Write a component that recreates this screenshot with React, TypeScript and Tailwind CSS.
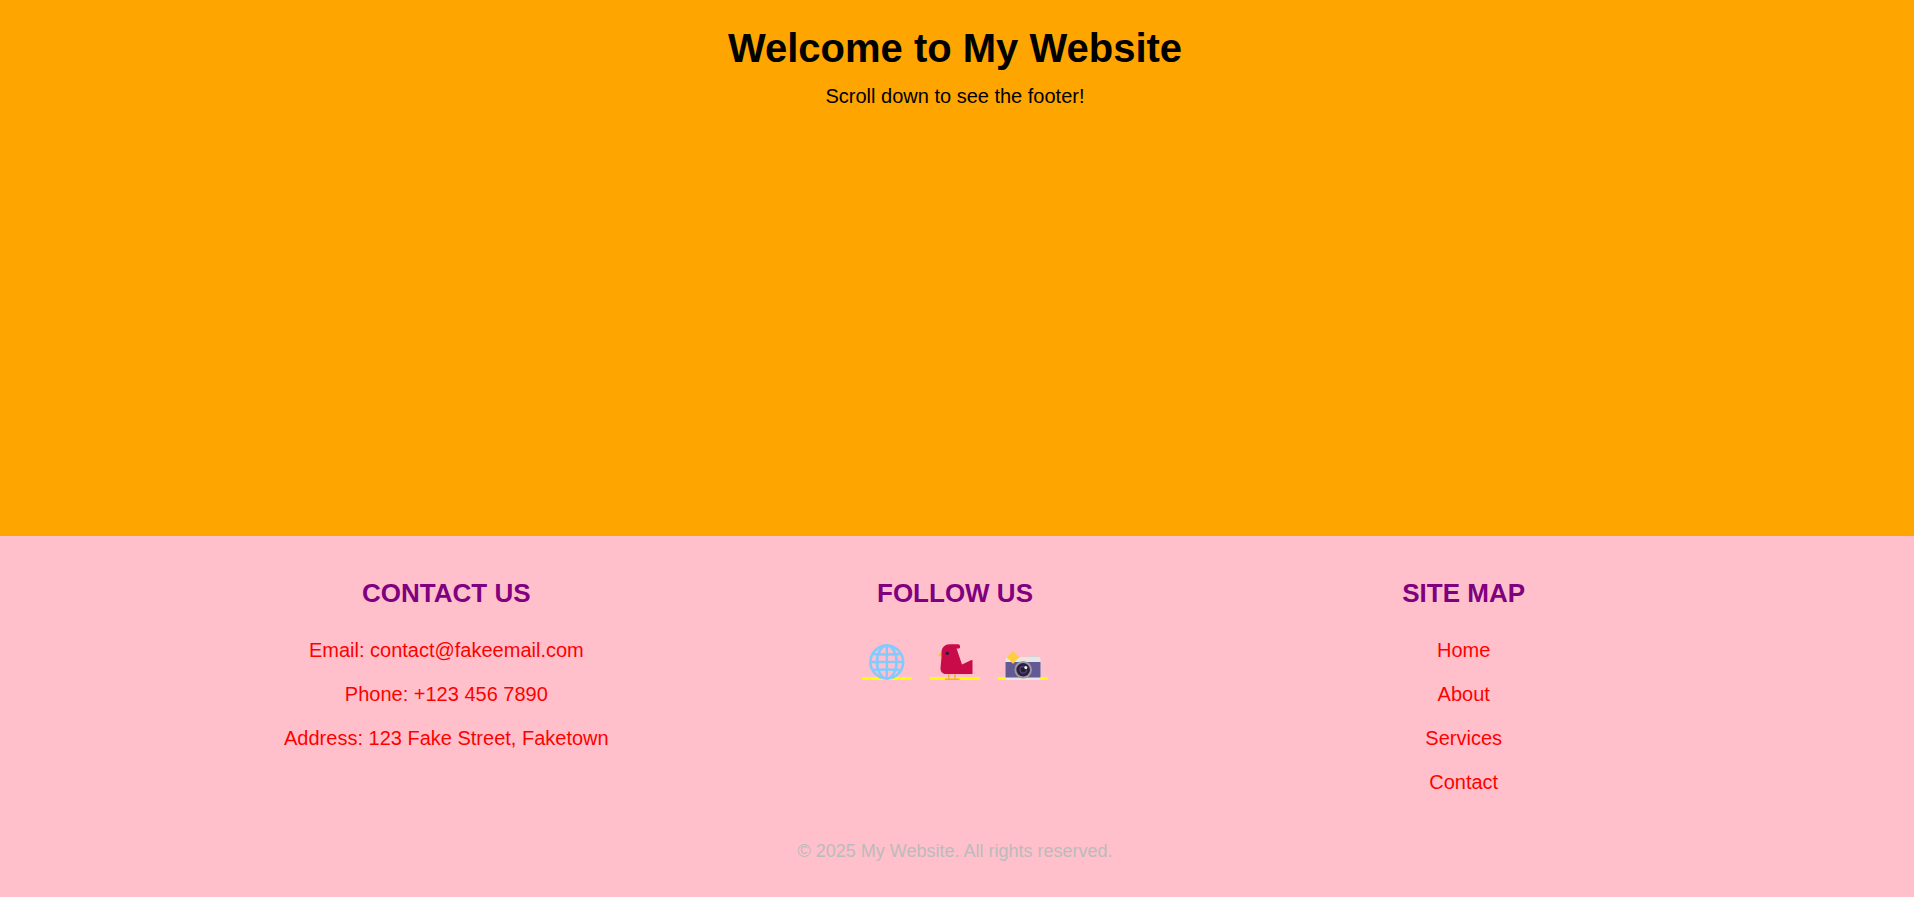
import type { ReactNode } from "react";

function GlobeIcon() {
  return (
    <svg viewBox="0 0 36 36" className="h-9 w-9" fill="none" stroke="#83cbff" strokeWidth="2.6" aria-hidden="true">
      <circle cx="17.800" cy="18" r="16.4" />
      <path d="M17.800 1v34M1 18h34" strokeWidth="2.4" />
      <path d="M4 10q14 1 28 0M4 26q14-1 28 0" strokeWidth="2.4" />
      <ellipse cx="17.800" cy="18" rx="9.800" ry="16.4" />
    </svg>
  );
}

function BirdIcon() {
  return (
    <svg viewBox="0 0 36 36" className="h-9 w-9" aria-hidden="true">
      <path d="M5.5 7.5 1.6 10.2q-.8.8 0 1.400L5 13.500z" fill="#f9c23c" />
      <path d="M11.700 29v6M18 29v6M8 35.200h8M15.500 35.200h7" stroke="#f3a94f" strokeWidth="1.500" fill="none" />
      <path
        d="M12.500.3H21q2 0 2 2v1.500q-2 1.500-3.500.5L25 20.500 34.500 16q1-.3 1 .7V30H9C5.500 30 3.300 27.500 3.500 24L4.500 13V8C4.800 3.500 8 .3 12.500.3z"
        fill="#ca0b4a"
      />
      <circle cx="10.300" cy="9.300" r="1.700" fill="#321b41" />
    </svg>
  );
}

function CameraIcon() {
  return (
    <svg viewBox="0 0 36 36" className="h-9 w-9" aria-hidden="true">
      <rect x="24" y="11.700" width="9" height="4" rx="1.500" fill="#d3d3d3" />
      <rect x="0.500" y="13" width="35" height="23" rx="2.500" fill="#e6e6e6" />
      <path d="M.500 18h35v15.500h-35z" fill="#635994" />
      <circle cx="18.200" cy="25.800" r="8.800" fill="#9b9b9b" />
      <circle cx="18.200" cy="25.800" r="6.800" fill="#321b41" />
      <circle cx="18.200" cy="25.800" r="4" fill="#493f78" />
      <circle cx="18.200" cy="25.800" r="2.500" fill="#212121" />
      <circle cx="20.800" cy="23.500" r="1.500" fill="#f4f4f4" />
      <path
        d="M8 8.300q2 3.400 5 5-3 1.600-5 5-2-3.400-5-5 3-1.600 5-5z"
        fill="#ffce3d"
        stroke="#ffce3d"
        strokeWidth="2.4"
        strokeLinejoin="round"
      />
    </svg>
  );
}

function Column({ title, children }: { title: string; children: ReactNode }) {
  return (
    <section className="flex-1">
      <h3 className="mb-5 text-[26px] leading-[42px] font-bold text-[purple] uppercase">{title}</h3>
      {children}
    </section>
  );
}

const contacts = ["Email: contact@fakeemail.com", "Phone: +123 456 7890", "Address: 123 Fake Street, Faketown"];
const pages = ["Home", "About", "Services", "Contact"];
const socials = [
  { label: "Website", icon: <GlobeIcon /> },
  { label: "Bird", icon: <BirdIcon /> },
  { label: "Photos", icon: <CameraIcon /> },
];

export default function App() {
  return (
    <div className="flex min-h-screen flex-col bg-[orange] font-['Liberation_Sans',Arial,sans-serif] text-xl leading-8 text-black">
      <main className="flex-1 pt-4 pr-1 text-center">
        <h1 className="text-[40px] leading-[64px] font-bold">Welcome to My Website</h1>
        <p>Scroll down to see the footer!</p>
      </main>
      <footer className="bg-[pink] pt-9 pr-1 pb-[30px] text-center text-[red]">
        <div className="mx-auto flex w-4/5 px-px">
          <Column title="Contact Us">
            <div className="space-y-3">
              {contacts.map((line) => (
                <p key={line}>{line}</p>
              ))}
            </div>
          </Column>
          <Column title="Follow Us">
            <div className="flex justify-center gap-[18px] pt-[10px]">
              {socials.map(({ label, icon }) => (
                <a
                  key={label}
                  href="#"
                  aria-label={label}
                  className="flex w-[50px] justify-center bg-[linear-gradient(yellow,yellow)] bg-[length:100%_3px] bg-bottom bg-no-repeat"
                >
                  {icon}
                </a>
              ))}
            </div>
          </Column>
          <Column title="Site Map">
            <ul className="space-y-3">
              {pages.map((page) => (
                <li key={page}>
                  <a href="#">{page}</a>
                </li>
              ))}
            </ul>
          </Column>
        </div>
        <p className="mt-[37px] text-lg leading-8 text-[#bbb]">© 2025 My Website. All rights reserved.</p>
      </footer>
    </div>
  );
}
